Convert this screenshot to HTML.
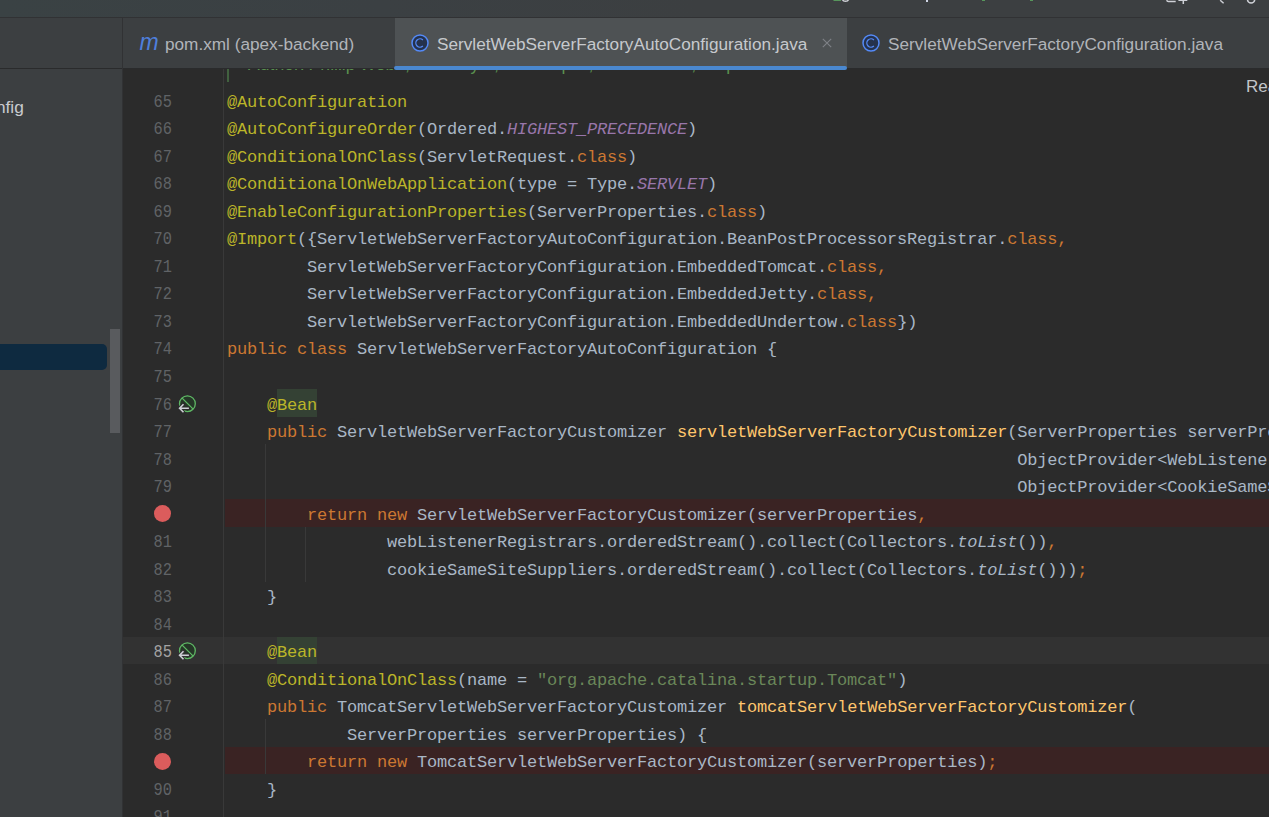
<!DOCTYPE html>
<html><head><meta charset="utf-8"><style>
*{margin:0;padding:0;box-sizing:border-box}
svg{display:block}
html,body{width:1269px;height:817px;overflow:hidden;background:#2B2B2B}
body{position:relative;font-family:"Liberation Sans",sans-serif}
.topbar{position:absolute;left:0;top:0;width:1269px;height:17px;background:linear-gradient(90deg,#3A4244 0px,#3B4043 380px,#3C3F41 700px)}
.topsep{position:absolute;left:0;top:17px;width:1269px;height:1px;background:#313234}
.tabrow{position:absolute;left:0;top:18px;width:1269px;height:50px;background:#3C3F41}
.tabsep{position:absolute;left:0;top:68px;width:1269px;height:1px;background:#2A2B2C}
.left{position:absolute;left:0;top:68px;width:122px;height:749px;background:#3C3F41}
.vsep{position:absolute;left:122px;top:18px;width:1px;height:799px;background:#313234}
.editor{position:absolute;left:123px;top:68px;width:1146px;height:749px;background:#2B2B2B;overflow:hidden}
.inner{position:absolute;left:-123px;top:-68px;width:1269px;height:817px}
.ln{position:absolute;left:123px;width:49px;height:27.52px;text-align:right;transform:scaleX(0.87);transform-origin:49px 0;font-family:"Liberation Mono",monospace;font-size:17.6px;letter-spacing:0px;line-height:27.52px;color:#606366;padding-top:2.5px;white-space:pre}
.ln.cur{color:#A4A3A3}
.code{position:absolute;left:227px;height:27.52px;font-family:"Liberation Mono",monospace;font-size:17px;letter-spacing:-0.2px;line-height:27.52px;color:#A9B7C6;padding-top:2.5px;white-space:pre}
.bp{position:absolute;left:225px;width:1044px;height:27.52px;background:#3A2323}
.caret{position:absolute;left:0;width:1269px;height:27.52px;background:#323232}
.bpdot{position:absolute;left:154px;width:17px;height:17px;border-radius:50%;background:#DB5C5C}
.gsep{position:absolute;left:223px;top:0;width:1px;height:817px;background:#393939}
.guide{position:absolute;width:1px;background:#393939}
.bn{color:#BBB529;background:#344134;display:inline-block;height:27.52px;margin-top:-2.5px;padding-top:2.5px}
.ov{position:absolute;left:177px;width:20px;height:20px}
.tab{position:absolute;top:18px;height:50px;font-size:17.2px;color:#B1B4B9}
.tab .lbl{position:absolute;top:16px;white-space:pre}
.sel{background:#4E5254}
.uline{position:absolute;left:394px;top:66px;width:453px;height:4px;background:#4A88D0;border-radius:2px}
</style></head><body>
<div class="topbar"><svg style="position:absolute;left:0;top:0" width="1269" height="17">
<rect x="833.5" y="-3" width="7.5" height="4" fill="#57965C"/>
<circle cx="845.5" cy="-2" r="3.3" fill="none" stroke="#CED0D6" stroke-width="1.5"/>
<rect x="926" y="0" width="2" height="2" fill="#D0D6E6"/>
<rect x="982" y="0" width="3" height="1" fill="#57965C"/>
<rect x="1030" y="0" width="3" height="1" fill="#57965C"/>
<path d="M1166.9 -4 V0 Q1166.9 1.6 1168.5 1.6 H1175.7" fill="none" stroke="#CED0D6" stroke-width="1.5"/>
<path d="M1183.3 -3 V4 M1178.4 0.3 H1187.3" fill="none" stroke="#CED0D6" stroke-width="1.5"/>
<path d="M1220.2 0.3 L1223.6 3.3" fill="none" stroke="#CED0D6" stroke-width="1.5"/>
<path d="M1247.5 -0.5 A3.6 3.6 0 0 0 1254.7 -0.5" fill="none" stroke="#CED0D6" stroke-width="1.5"/>
</svg></div>
<div class="topsep"></div>
<div class="tabrow"></div>
<div class="left"></div>
<div class="editor"><div class="inner">
<div class="bp" style="top:499.10px"></div><div class="caret" style="top:636.70px"></div><div class="bp" style="top:746.78px"></div>
<div class="gsep"></div>
<div class="guide" style="left:265px;top:444.06px;height:137.60px"></div><div class="guide" style="left:305px;top:526.62px;height:55.04px"></div><div class="guide" style="left:265px;top:719.26px;height:55.04px"></div>
<div class="jd" style="position:absolute;left:227px;top:58px;width:2px;height:24px;background:#41613F"></div>
<div style="position:absolute;left:248px;top:54px;font-size:17.6px;word-spacing:-1px;color:#5A914F;white-space:pre">Author: Phillip Webb, Dave Syer, Ivan Sopov, Brian Clozel, Stephane Nicoll</div>
<div class="ln" style="top:86.30px">65</div><div class="code" style="top:86.30px"><span style="color:#BBB529">@AutoConfiguration</span></div><div class="ln" style="top:113.82px">66</div><div class="code" style="top:113.82px"><span style="color:#BBB529">@AutoConfigureOrder</span><span style="color:#A9B7C6">(Ordered.</span><span style="color:#9876AA;font-style:italic">HIGHEST_PRECEDENCE</span><span style="color:#A9B7C6">)</span></div><div class="ln" style="top:141.34px">67</div><div class="code" style="top:141.34px"><span style="color:#BBB529">@ConditionalOnClass</span><span style="color:#A9B7C6">(ServletRequest.</span><span style="color:#CC7832">class</span><span style="color:#A9B7C6">)</span></div><div class="ln" style="top:168.86px">68</div><div class="code" style="top:168.86px"><span style="color:#BBB529">@ConditionalOnWebApplication</span><span style="color:#A9B7C6">(type = Type.</span><span style="color:#9876AA;font-style:italic">SERVLET</span><span style="color:#A9B7C6">)</span></div><div class="ln" style="top:196.38px">69</div><div class="code" style="top:196.38px"><span style="color:#BBB529">@EnableConfigurationProperties</span><span style="color:#A9B7C6">(ServerProperties.</span><span style="color:#CC7832">class</span><span style="color:#A9B7C6">)</span></div><div class="ln" style="top:223.90px">70</div><div class="code" style="top:223.90px"><span style="color:#BBB529">@Import</span><span style="color:#A9B7C6">({ServletWebServerFactoryAutoConfiguration.BeanPostProcessorsRegistrar.</span><span style="color:#CC7832">class,</span></div><div class="ln" style="top:251.42px">71</div><div class="code" style="top:251.42px"><span style="color:#A9B7C6">        ServletWebServerFactoryConfiguration.EmbeddedTomcat.</span><span style="color:#CC7832">class,</span></div><div class="ln" style="top:278.94px">72</div><div class="code" style="top:278.94px"><span style="color:#A9B7C6">        ServletWebServerFactoryConfiguration.EmbeddedJetty.</span><span style="color:#CC7832">class,</span></div><div class="ln" style="top:306.46px">73</div><div class="code" style="top:306.46px"><span style="color:#A9B7C6">        ServletWebServerFactoryConfiguration.EmbeddedUndertow.</span><span style="color:#CC7832">class</span><span style="color:#A9B7C6">})</span></div><div class="ln" style="top:333.98px">74</div><div class="code" style="top:333.98px"><span style="color:#CC7832">public class </span><span style="color:#A9B7C6">ServletWebServerFactoryAutoConfiguration {</span></div><div class="ln" style="top:361.50px">75</div><div class="code" style="top:361.50px"></div><div class="ln" style="top:389.02px">76</div><div class="code" style="top:389.02px"><span style="color:#BBB529">    @</span><span class="bn">Bean</span></div><div class="ln" style="top:416.54px">77</div><div class="code" style="top:416.54px"><span style="color:#CC7832">    public </span><span style="color:#A9B7C6">ServletWebServerFactoryCustomizer </span><span style="color:#FFC66D">servletWebServerFactoryCustomizer</span><span style="color:#A9B7C6">(ServerProperties serverProperties</span><span style="color:#CC7832">,</span></div><div class="ln" style="top:444.06px">78</div><div class="code" style="top:444.06px"><span style="color:#A9B7C6">                                                                               ObjectProvider&lt;WebListenerRegistrar&gt; webListenerRegistrars</span><span style="color:#CC7832">,</span></div><div class="ln" style="top:471.58px">79</div><div class="code" style="top:471.58px"><span style="color:#A9B7C6">                                                                               ObjectProvider&lt;CookieSameSiteSupplier&gt; cookieSameSiteSuppliers) {</span></div><div class="bpdot" style="top:505.26px"></div><div class="code" style="top:499.10px"><span style="color:#CC7832">        return new </span><span style="color:#A9B7C6">ServletWebServerFactoryCustomizer(serverProperties</span><span style="color:#CC7832">,</span></div><div class="ln" style="top:526.62px">81</div><div class="code" style="top:526.62px"><span style="color:#A9B7C6">                webListenerRegistrars.orderedStream().collect(Collectors.</span><span style="color:#A9B7C6;font-style:italic">toList</span><span style="color:#A9B7C6">())</span><span style="color:#CC7832">,</span></div><div class="ln" style="top:554.14px">82</div><div class="code" style="top:554.14px"><span style="color:#A9B7C6">                cookieSameSiteSuppliers.orderedStream().collect(Collectors.</span><span style="color:#A9B7C6;font-style:italic">toList</span><span style="color:#A9B7C6">()))</span><span style="color:#CC7832">;</span></div><div class="ln" style="top:581.66px">83</div><div class="code" style="top:581.66px"><span style="color:#A9B7C6">    }</span></div><div class="ln" style="top:609.18px">84</div><div class="code" style="top:609.18px"></div><div class="ln cur" style="top:636.70px">85</div><div class="code" style="top:636.70px"><span style="color:#BBB529">    @</span><span class="bn">Bean</span></div><div class="ln" style="top:664.22px">86</div><div class="code" style="top:664.22px"><span style="color:#BBB529">    @ConditionalOnClass</span><span style="color:#A9B7C6">(name = </span><span style="color:#6A8759">&quot;org.apache.catalina.startup.Tomcat&quot;</span><span style="color:#A9B7C6">)</span></div><div class="ln" style="top:691.74px">87</div><div class="code" style="top:691.74px"><span style="color:#CC7832">    public </span><span style="color:#A9B7C6">TomcatServletWebServerFactoryCustomizer </span><span style="color:#FFC66D">tomcatServletWebServerFactoryCustomizer</span><span style="color:#A9B7C6">(</span></div><div class="ln" style="top:719.26px">88</div><div class="code" style="top:719.26px"><span style="color:#A9B7C6">            ServerProperties serverProperties) {</span></div><div class="bpdot" style="top:752.94px"></div><div class="code" style="top:746.78px"><span style="color:#CC7832">        return new </span><span style="color:#A9B7C6">TomcatServletWebServerFactoryCustomizer(serverProperties)</span><span style="color:#CC7832">;</span></div><div class="ln" style="top:774.30px">90</div><div class="code" style="top:774.30px"><span style="color:#A9B7C6">    }</span></div><div class="ln" style="top:801.82px">91</div><div class="code" style="top:801.82px"></div>
<div class="ov" style="top:392.78px"><svg width="22" height="22" viewBox="0 0 22 22"><circle cx="10.4" cy="10.7" r="7.9" fill="#253627" stroke="#5FB865" stroke-width="1.3"/><line x1="4.9" y1="4.9" x2="15.9" y2="15.9" stroke="#5FB865" stroke-width="1.3"/><path d="M2.6 15.2 H11.9 M6.5 11.2 L2.6 15.2 L6.5 19.2" fill="none" stroke="#2B2B2B" stroke-width="3.4" stroke-linecap="round"/><path d="M2.6 15.2 H11.9 M6.5 11.2 L2.6 15.2 L6.5 19.2" fill="none" stroke="#CED0D6" stroke-width="1.6"/></svg></div><div class="ov" style="top:640.46px"><svg width="22" height="22" viewBox="0 0 22 22"><circle cx="10.4" cy="10.7" r="7.9" fill="#253627" stroke="#5FB865" stroke-width="1.3"/><line x1="4.9" y1="4.9" x2="15.9" y2="15.9" stroke="#5FB865" stroke-width="1.3"/><path d="M2.6 15.2 H11.9 M6.5 11.2 L2.6 15.2 L6.5 19.2" fill="none" stroke="#323232" stroke-width="3.4" stroke-linecap="round"/><path d="M2.6 15.2 H11.9 M6.5 11.2 L2.6 15.2 L6.5 19.2" fill="none" stroke="#CED0D6" stroke-width="1.6"/></svg></div>
<div style="position:absolute;left:1246px;top:77px;font-size:17px;color:#C3C6CA;white-space:pre">Reader Mode</div>
</div></div>
<div class="tabsep"></div>
<div class="vsep"></div>
<div style="position:absolute;left:-13.7px;top:96.5px;font-size:17.3px;color:#C9CBCF;white-space:pre">onfig</div>
<div style="position:absolute;left:0;top:344px;width:107px;height:25.6px;background:#0E2A40;border-radius:0 5px 5px 0"></div>
<div style="position:absolute;left:110px;top:329px;width:10px;height:104px;background:#595B5E"></div>
<div class="tab" style="left:123px;width:272px">
  <div style="position:absolute;left:16.5px;top:11px;font-size:23px;font-style:italic;color:#4F7FDC">m</div>
  <div class="lbl" style="left:42px">pom.xml (apex-backend)</div>
</div>
<div class="tab sel" style="left:395px;width:452px">
  <div style="position:absolute;left:16px;top:16px"><svg width="18" height="18" viewBox="0 0 18 18"><circle cx="9" cy="9" r="8" fill="#25324D" stroke="#548AF7" stroke-width="1.5"/><path d="M11.9 5.9 A4.2 4.2 0 1 0 11.9 12.1" fill="none" stroke="#548AF7" stroke-width="1.3"/></svg></div>
  <div class="lbl" style="left:42px;color:#C6C9CD;font-size:17.2px">ServletWebServerFactoryAutoConfiguration.java</div>
  <div style="position:absolute;left:427px;top:20px;width:10px;height:10px">
   <svg width="10" height="10" viewBox="0 0 10 10"><path d="M0.8 0.8L9.2 9.2M9.2 0.8L0.8 9.2" stroke="#7F8287" stroke-width="1.1"/></svg></div>
</div>
<div class="uline"></div>
<div class="tab" style="left:847px;width:422px">
  <div style="position:absolute;left:15px;top:16px"><svg width="18" height="18" viewBox="0 0 18 18"><circle cx="9" cy="9" r="8" fill="#25324D" stroke="#548AF7" stroke-width="1.5"/><path d="M11.9 5.9 A4.2 4.2 0 1 0 11.9 12.1" fill="none" stroke="#548AF7" stroke-width="1.3"/></svg></div>
  <div class="lbl" style="left:41px">ServletWebServerFactoryConfiguration.java</div>
</div>
</body></html>
